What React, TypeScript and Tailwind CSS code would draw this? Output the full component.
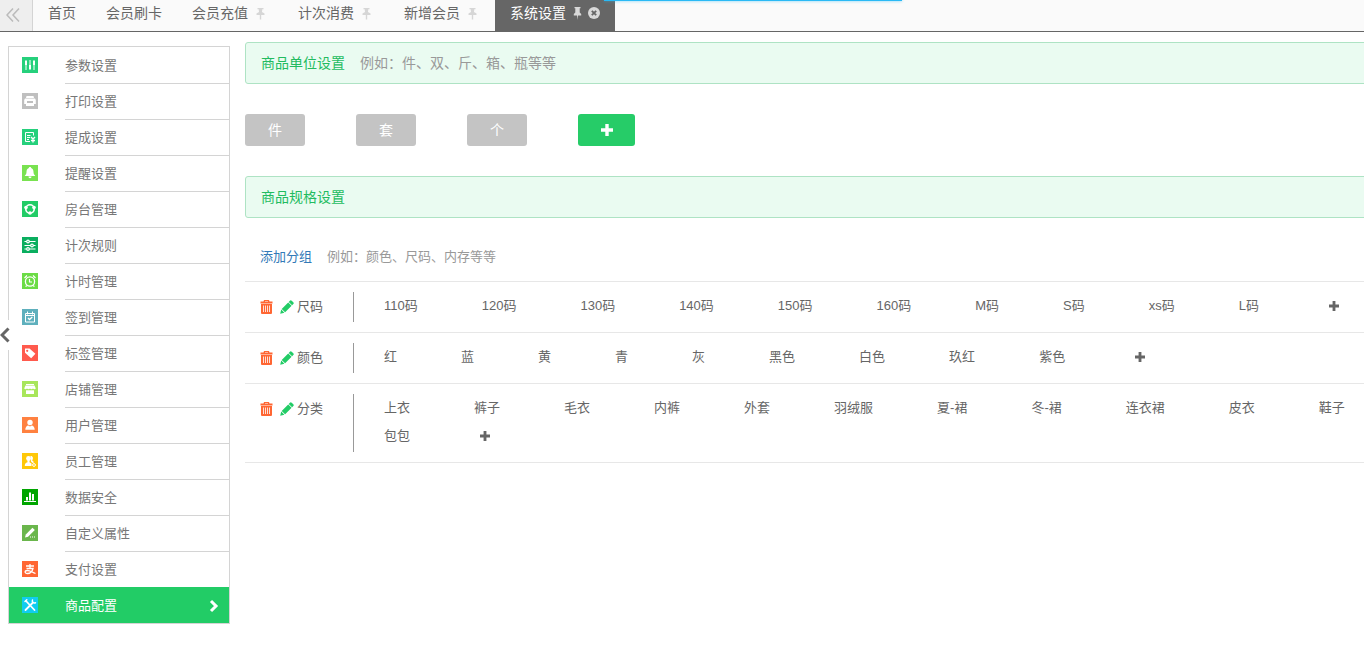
import type { ReactNode } from 'react';

interface Tab {
  title: string;
  pinned?: boolean;
  active?: boolean;
}

interface MenuItem {
  title: string;
  color: string;
  icon: ReactNode;
  active?: boolean;
}

interface SpecGroup {
  name: string;
  values: string[];
}

const tabs: Tab[] = [
  { title: '首页' },
  { title: '会员刷卡' },
  { title: '会员充值', pinned: true },
  { title: '计次消费', pinned: true },
  { title: '新增会员', pinned: true },
  { title: '系统设置', active: true },
];

const menu: MenuItem[] = [
  {
    title: '参数设置',
    color: 'bg-[#26d07c]',
    icon: (
      <g fill="#fff">
        <path d="M3.500 3h1v10h-1zM7.500 3h1v10h-1zM11.500 3h1v10h-1z" />
        <path d="M3 4h2v4H3zM7 8h2v4H7zM11 4h2v4h-2z" />
      </g>
    ),
  },
  {
    title: '打印设置',
    color: 'bg-[#bfbfbf]',
    icon: (
      <g fill="#fff">
        <path d="M4.500 3h7l.5 2H4z" />
        <path fillRule="evenodd" d="M3 5.500h10l.8 1.500v4H2.200V7zM5 8v2h6V8z" />
        <path d="M4 10.500h8V13H4z" />
      </g>
    ),
  },
  {
    title: '提成设置',
    color: 'bg-[#26d07c]',
    icon: (
      <g fill="none" stroke="#fff">
        <path d="M11.500 6.500v-3h-8v9H8M5 6.500h3.500M5 8.500h3M5 10.500h2" />
        <path d="M9 8l2 2 2-2M11 9.500v4M9 11.500h4" strokeWidth="1.400" />
      </g>
    ),
  },
  {
    title: '提醒设置',
    color: 'bg-[#79e250]',
    icon: (
      <path
        fill="#fff"
        d="M8 2c.7 0 1.200.4 1.200 1.100C10.900 3.800 11.500 5.200 11.500 7c0 1.700.7 2.800 1.800 4H2.700c1.100-1.200 1.800-2.300 1.800-4 0-1.800.6-3.200 2.300-3.900C6.800 2.400 7.300 2 8 2zM6.500 11.500h3c0 .9-.6 1.700-1.500 1.700s-1.500-.8-1.500-1.700z"
      />
    ),
  },
  {
    title: '房台管理',
    color: 'bg-[#22cc66]',
    icon: (
      <g>
        <circle cx="8" cy="8" r="4.200" fill="none" stroke="#fff" strokeWidth="1.600" />
        <circle cx="4" cy="6.500" r="1.800" fill="#fff" />
        <circle cx="12" cy="6.500" r="1.800" fill="#fff" />
        <circle cx="8" cy="12" r="1.800" fill="#fff" />
      </g>
    ),
  },
  {
    title: '计次规则',
    color: 'bg-[#0aae5f]',
    icon: (
      <g stroke="#fff" strokeWidth="1.200" fill="#0aae5f">
        <path d="M2.500 4.500h11M2.500 8.500h11M2.500 12h11" />
        <circle cx="6" cy="4.500" r="1.300" />
        <circle cx="10" cy="8.500" r="1.300" />
        <circle cx="6" cy="12" r="1.300" />
      </g>
    ),
  },
  {
    title: '计时管理',
    color: 'bg-[#6bdc45]',
    icon: (
      <g stroke="#fff" fill="none">
        <circle cx="8" cy="8.500" r="4.600" strokeWidth="1.300" />
        <path d="M7.500 6v3h2.500M2.500 5l2.500-2.500M13.500 5L11 2.500M4.800 12.500l-1.200 1.200M11.200 12.500l1.200 1.200" strokeWidth="1.200" />
      </g>
    ),
  },
  {
    title: '签到管理',
    color: 'bg-[#5fb0bd]',
    icon: (
      <g stroke="#fff" fill="none">
        <path d="M3.500 4.500h9v8.500h-9zM3.500 6.500h9M5.500 2.500v3M10.500 2.500v3" />
        <path d="M6 9l1.500 1.500L10.300 8" strokeWidth="1.300" />
      </g>
    ),
  },
  {
    title: '标签管理',
    color: 'bg-[#ff5a4d]',
    icon: (
      <path
        fill="#fff"
        fillRule="evenodd"
        d="M3 3.500h4.500l5.900 5.200-4.200 4.500L3 7.800zM5.200 4.700a1.100 1.100 0 100 2.200 1.100 1.100 0 000-2.200z"
      />
    ),
  },
  {
    title: '店铺管理',
    color: 'bg-[#a8e65a]',
    icon: (
      <g fill="#fff">
        <path d="M4 3h8v1H4zM3.500 4.600h9L13.800 7.500c-.8 1.100-2 1.100-2.800 0-.8 1.100-2.200 1.100-3 0-.8 1.100-2.200 1.100-3 0-.8 1.100-2 1.100-2.800 0z" />
        <path d="M4 9.300h8V13H4z" />
      </g>
    ),
  },
  {
    title: '用户管理',
    color: 'bg-[#ff8140]',
    icon: (
      <g fill="#fff">
        <circle cx="8" cy="5.500" r="2.700" />
        <path d="M3.300 12.800c0-2.900 1.500-4.100 3-4.300L8 9.500l1.700-1c1.500.2 3 1.400 3 4.300z" />
      </g>
    ),
  },
  {
    title: '员工管理',
    color: 'bg-[#ffc808]',
    icon: (
      <g fill="#fff">
        <circle cx="6.500" cy="5.500" r="2.400" />
        <path d="M5.500 7h2v2.200l2 1.300V13H2.800c0-2.500.8-3.300 2.700-3.800zM8.500 3c2.700-.2 3 2.500 1.700 4.500l2 1.700-1.700.8L9 8.500z" />
        <circle cx="12" cy="12" r="1.400" fill="none" stroke="#fff" />
      </g>
    ),
  },
  {
    title: '数据安全',
    color: 'bg-[#00a500]',
    icon: <path fill="#fff" d="M2 12h12v1H2zM4 8h2v3.500H4zM7 3.500h2v8H7zM10 5h2v6.500h-2z" />,
  },
  {
    title: '自定义属性',
    color: 'bg-[#6ab64c]',
    icon: (
      <g fill="#fff">
        <path d="M3 12.500l.8-3L10.500 2.800l2.300 2.200-6.700 6.700z" />
        <path d="M8 11.500h1v1H8zM10 11.500h1v1h-1zM12 11.500h1v1h-1z" />
      </g>
    ),
  },
  {
    title: '支付设置',
    color: 'bg-[#ff6633]',
    icon: (
      <path
        fill="none"
        stroke="#fff"
        strokeWidth="1.300"
        d="M4 5h8M8 3v4.500M4.500 7.500H11c-.8 3-3 5-5.500 5-3.200 0-3.200-3 0-3 2.500 0 4.500 1.700 8 3"
      />
    ),
  },
  {
    title: '商品配置',
    color: 'bg-[#10cdf0]',
    icon: (
      <g stroke="#fff" fill="none" strokeLinecap="round">
        <path d="M3.500 13L10.500 6M4 4l8.500 9" strokeWidth="1.800" />
        <path d="M10.500 3c-.8 1.700.8 3.600 3 2.700M3 4.500L4.800 2.700" strokeWidth="1.500" />
      </g>
    ),
    active: true,
  },
];

const units = ['件', '套', '个'];

const groups: SpecGroup[] = [
  { name: '尺码', values: ['110码', '120码', '130码', '140码', '150码', '160码', 'M码', 'S码', 'xs码', 'L码'] },
  { name: '颜色', values: ['红', '蓝', '黄', '青', '灰', '黑色', '白色', '玖红', '紫色'] },
  {
    name: '分类',
    values: ['上衣', '裤子', '毛衣', '内裤', '外套', '羽绒服', '夏-裙', '冬-裙', '连衣裙', '皮衣', '鞋子', '包包'],
  },
];

function PinIcon({ active }: { active?: boolean }) {
  if (active) {
    return (
      <svg viewBox="0 0 9 13" className="h-[13px] w-[9px] fill-[#d9d9d9]">
        <path d="M1.500 0h6v1.200h-.8V5.500L8.200 7v1.500H5L4.500 13 4 8.500H.8V7l1.500-1.500V1.200h-.8z" />
      </svg>
    );
  }
  return (
    <svg viewBox="0 0 9 13" className="h-[13px] w-[9px] fill-[#d6d6d6]">
      <path d="M1.500 1h6v1.200H6.300L6 5l2.500 1.500V8H5.200v4.500H3.800V8H.5V6.500L3 5l-.3-2.800H1.500z" />
    </svg>
  );
}

function PlusIcon({ className }: { className: string }) {
  return (
    <svg viewBox="0 0 12 12" className={className}>
      <path fill="currentColor" d="M4.300 0h3.400v4.300H12v3.400H7.700V12H4.300V7.700H0V4.300h4.300z" />
    </svg>
  );
}

function TrashIcon() {
  return (
    <svg viewBox="0 0 13 14" className="h-[14px] w-[13px] fill-[#ff6633]">
      <path
        fillRule="evenodd"
        d="M4 0h5l.5 1.500h3V3.500H.5V1.500h3zM5 1v.500h3V1zM1 4h11v9a1 1 0 01-1 1H2a1 1 0 01-1-1zM3.200 5.500v6.500h.8V5.500zM5.200 5.500v6.500h.8V5.500zM7.200 5.500v6.500h.8V5.500zM9.200 5.500v6.500h.8V5.500z"
      />
    </svg>
  );
}

function PencilIcon() {
  return (
    <svg viewBox="0 0 14 14" className="h-[14px] w-[14px] fill-[#22cc66]">
      <path d="M9.900.7a1.300 1.300 0 011.800 0l1.600 1.600a1.300 1.300 0 010 1.800l-1.200 1.200-3.400-3.400zM8.200 2.400l3.400 3.400-6.500 6.500-3.400-3.400zM1.200 9.600l3.200 3.200-4.200 1z" />
    </svg>
  );
}

function TabBar() {
  return (
    <nav className="relative flex h-8 border-b border-[#666] bg-[#fafafa] text-sm text-[#666]">
      <button aria-label="向左滚动" className="flex w-[33px] justify-center border-r border-[#d4d4d4] bg-[#eee] pt-2 pr-1.5">
        <svg viewBox="0 0 14 14" className="h-[14px] w-[14px] fill-none stroke-[#bbb] stroke-[1.5]">
          <path d="M7 .5L1 7l6 6.500M13 .5L7 7l6 6.500" />
        </svg>
      </button>
      {tabs.map((tab) => (
        <a
          key={tab.title}
          href="#"
          className={`flex h-[31px] items-center px-[15px] pb-[5px] ${tab.active ? 'bg-[#666] text-white' : ''}`}
        >
          {tab.title}
          {(tab.pinned || tab.active) && (
            <span className={`flex items-center ${tab.active ? 'ml-[7px] gap-1.5' : 'mr-[3px] ml-2'}`}>
              <PinIcon active={tab.active} />
              {tab.active && (
                <svg viewBox="0 0 12 12" className="h-3 w-3">
                  <circle cx="6" cy="6" r="6" fill="#d9d9d9" />
                  <path d="M3.800 3.800l4.400 4.400M8.200 3.800L3.800 8.200" stroke="#666" strokeWidth="1.800" />
                </svg>
              )}
            </span>
          )}
        </a>
      ))}
      {/* page loading bar */}
      <div className="absolute top-0 left-[604px] h-px w-[298px] bg-[#29b9f5] shadow-[0_0_3px_#29b9f5]" />
    </nav>
  );
}

function SideMenu() {
  return (
    <aside className="relative mt-[14px] ml-2 w-[222px] shrink-0 self-start border border-[#d4d4d4] text-[13px] text-[#777]">
      {menu.map((item, i) => (
        <a
          key={item.title}
          href="#"
          className={`flex h-9 items-center pl-[13px] ${item.active ? 'bg-[#22cc66] text-white' : ''}`}
        >
          <svg viewBox="0 0 16 16" className={`h-4 w-4 ${item.color}`}>
            {item.icon}
          </svg>
          <span
            className={`ml-[27px] flex h-9 flex-1 items-center justify-between border-t pr-[10px] ${
              i === 0 || item.active ? 'border-transparent' : 'border-[#d4d4d4]'
            }`}
          >
            {item.title}
            {item.active && (
              <svg viewBox="0 0 10 14" className="h-[14px] w-[10px] fill-none stroke-white stroke-[3]">
                <path d="M2 2l5 5-5 5" />
              </svg>
            )}
          </span>
        </a>
      ))}
      <button aria-label="收起菜单" className="absolute top-[273px] -left-[9px] flex h-[30px] w-[10px] items-center bg-white">
        <svg viewBox="0 0 10 16" className="h-4 w-[10px] fill-none stroke-[#666] stroke-[3]">
          <path d="M8.500 1.500L2 8l6.500 6.500" />
        </svg>
      </button>
    </aside>
  );
}

function SectionTitle({ title, hint }: { title: string; hint?: string }) {
  return (
    <div className="flex h-[42px] items-center gap-[15px] rounded-[3px] border border-[#aee3c4] bg-[#eafbf1] px-[15px] text-sm">
      <h2 className="text-[#22bb60]">{title}</h2>
      {hint && <span className="text-[#999]">{hint}</span>}
    </div>
  );
}

function SpecRow({ group }: { group: SpecGroup }) {
  return (
    <div className="flex border-b border-[#e7e7e7] py-[10px] leading-7">
      <div className="flex h-[29px] w-[108px] shrink-0 items-center pl-[15px]">
        <button aria-label="删除">
          <TrashIcon />
        </button>
        <button aria-label="编辑" className="mr-[3px] ml-[7px]">
          <PencilIcon />
        </button>
        {group.name}
      </div>
      <div className="flex flex-1 flex-wrap gap-x-1 border-l border-[#999] pb-0.5">
        {group.values.map((value) => (
          <span key={value} className="px-[30px]">
            {value}
          </span>
        ))}
        <button aria-label="添加规格" className="ml-[30px] flex h-7 items-center px-1.5">
          <PlusIcon className="h-[10px] w-[10px]" />
        </button>
      </div>
    </div>
  );
}

export default function App() {
  return (
    <div className="overflow-x-hidden bg-white font-['Liberation_Sans','Noto_Sans_CJK_SC',sans-serif]">
      <TabBar />
      <div className="flex">
        <SideMenu />
        {/* content runs past the right edge of the frame */}
        <main className="-mr-5 ml-[15px] flex-1 pt-[10px] text-[13px] text-[#666]">
          <SectionTitle title="商品单位设置" hint="例如：件、双、斤、箱、瓶等等" />
          <div className="flex gap-[51px] py-[30px] text-sm text-white">
            {units.map((unit) => (
              <button key={unit} className="h-8 w-[60px] rounded-[3px] bg-[#c4c4c4]">
                {unit}
              </button>
            ))}
            <button aria-label="添加单位" className="flex h-8 w-[57px] items-center justify-center rounded-[3px] bg-[#26cc68]">
              <PlusIcon className="h-3 w-3" />
            </button>
          </div>
          <SectionTitle title="商品规格设置" />
          <div className="flex gap-[15px] border-b border-[#e7e7e7] pt-[25px] pb-[10px] pl-[15px] leading-7">
            <a href="#" className="text-[#337ab7]">
              添加分组
            </a>
            <span className="text-[#999]">例如：颜色、尺码、内存等等</span>
          </div>
          {groups.map((group) => (
            <SpecRow key={group.name} group={group} />
          ))}
        </main>
      </div>
    </div>
  );
}
